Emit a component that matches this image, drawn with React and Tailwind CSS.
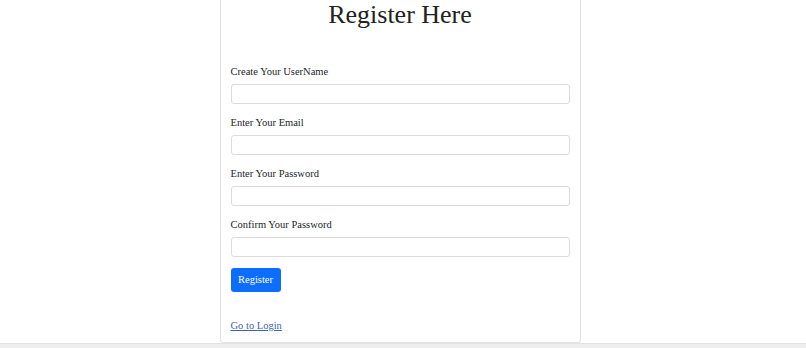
export default function App() {
  const fields = [
    { label: 'Create Your UserName', type: 'text' },
    { label: 'Enter Your Email', type: 'email' },
    { label: 'Enter Your Password', type: 'password' },
    { label: 'Confirm Your Password', type: 'password' },
  ];

  return (
    <div className="bg-white font-['Liberation_Serif',serif] text-[#212529]">
      <div className="flex justify-center pr-[6px]">
        <div className="w-[361px] h-[343px] border-x border-b border-[#e3e3e3] rounded-b-[3px] px-[10px]">
          <h1 className="text-center text-[26px] leading-[30px] text-[#222]">Register Here</h1>

          <form className="mt-[34px] flex flex-col" onSubmit={(e) => e.preventDefault()}>
            {fields.map((f) => (
              <div key={f.label} className="mb-[11px]">
                <label className="block text-[10.5px] leading-[15px]">{f.label}</label>
                <input
                  type={f.type}
                  className="mt-[5px] block w-full h-[20px] border border-[#dcdcdc] rounded-[3px] bg-white outline-none"
                />
              </div>
            ))}
            <button
              type="submit"
              className="block w-[50px] h-[24px] bg-[#0d6efd] text-white text-[10.5px] rounded-[3px]"
            >
              Register
            </button>
          </form>

          <a href="#" className="block mt-[26px] w-fit text-[10.5px] leading-[15px] text-[#3c64b4] underline">
            Go to Login
          </a>
        </div>
      </div>
      <div className="h-[5px] bg-[#eeeeee] border-t border-[#e2e2e2]" />
    </div>
  );
}
